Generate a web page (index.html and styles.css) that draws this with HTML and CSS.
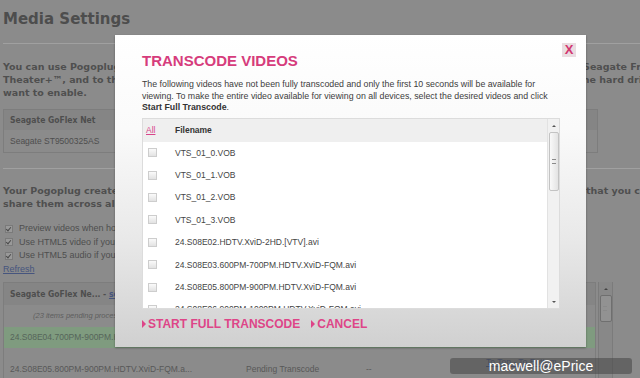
FILE: index.html
```html
<!DOCTYPE html>
<html lang="en">
  <head>
    <meta charset="UTF-8" />
    <title>Media Settings</title>
    <link rel="stylesheet" href="styles.css">
  </head>
  <body>
    <div class="page">
      <h1 class="title">Media Settings</h1>
      <hr class="rule" />

      <p class="lead">
        You can use Pogoplug to stream your media to devices such as the Apple TV, iPhone, iPad, Xbox 360, Roku, Seagate FreeAgent<br>
        Theater+™, and to the web. Pogoplug will index media on the drives you select below. Choose which of all the hard drives you<br>
        want to enable.
      </p>

      <div class="device-box">
        <div class="device-head">Seagate GoFlex Net</div>
        <div class="device-row">Seagate ST9500325AS</div>
      </div>

      <hr class="rule rule-low" />

      <p class="lead lead-low">
        Your Pogoplug creates copies of your videos in formats for the web, mobile phones and all other TV devices that you can<br>
        share them across all of your devices.
      </p>

      <ul class="options">
        <li><span class="check"></span>Preview videos when hovering over thumbnails</li>
        <li><span class="check"></span>Use HTML5 video if your browser supports it</li>
        <li><span class="check"></span>Use HTML5 audio if your browser supports it</li>
      </ul>
      <a class="refresh" href="#">Refresh</a>

      <div class="media-table">
        <div class="media-list">
          <div class="ml-head">Seagate GoFlex Ne... - <a href="#">select all</a></div>
          <div class="ml-note">(23 items pending processing)</div>
          <div class="ml-row active">24.S08E04.700PM-900PM.HDTV.XviD-FQM.avi</div>
          <div class="ml-row">
            <span class="ml-name">24.S08E05.800PM-900PM.HDTV.XviD-FQM.a...</span>
            <span class="ml-state">Pending Transcode</span>
            <span class="ml-dash">--</span>
            <a class="ml-jump" href="#">To Top - To Bottom</a>
          </div>
        </div>
        <div class="scrollbar page-scroll">
          <span class="arrow up"></span>
          <span class="thumb"></span>
        </div>
      </div>
    </div>

    <div class="modal">
      <span class="close">X</span>
      <h2 class="modal-title">TRANSCODE VIDEOS</h2>
      <p class="modal-text">
        The following videos have not been fully transcoded and only the first 10 seconds will be available for<br>
        viewing. To make the entire video available for viewing on all devices, select the desired videos and click<br>
        <strong>Start Full Transcode</strong>.
      </p>

      <div class="tv-list">
        <div class="tv-table">
          <div class="tv-head">
            <a href="#" class="tv-all">All</a>
            <span>Filename</span>
          </div>
          <div class="tv-body">
            <div class="tv-row"><span class="box"></span><span>VTS_01_0.VOB</span></div>
            <div class="tv-row"><span class="box"></span><span>VTS_01_1.VOB</span></div>
            <div class="tv-row"><span class="box"></span><span>VTS_01_2.VOB</span></div>
            <div class="tv-row"><span class="box"></span><span>VTS_01_3.VOB</span></div>
            <div class="tv-row"><span class="box"></span><span>24.S08E02.HDTV.XviD-2HD.[VTV].avi</span></div>
            <div class="tv-row"><span class="box"></span><span>24.S08E03.600PM-700PM.HDTV.XviD-FQM.avi</span></div>
            <div class="tv-row"><span class="box"></span><span>24.S08E05.800PM-900PM.HDTV.XviD-FQM.avi</span></div>
            <div class="tv-row"><span class="box"></span><span>24.S08E06.900PM-1000PM.HDTV.XviD-FQM.avi</span></div>
          </div>
        </div>
        <div class="scrollbar">
          <span class="arrow up"></span>
          <span class="thumb"></span>
          <span class="fill"></span>
          <span class="arrow down"></span>
        </div>
      </div>

      <div class="modal-actions">
        <a href="#" class="action">START FULL TRANSCODE</a>
        <a href="#" class="action">CANCEL</a>
      </div>
    </div>

    <div class="watermark">macwell@ePrice</div>
  </body>
</html>
```

FILE: styles.css
```css
body {
  margin: 0;
  width: 640px;
  height: 378px;
  overflow: hidden;
  position: relative;
  background: #8b8b8b;
  color: #4e4e4e;
  font-family: "Liberation Sans", Arial, sans-serif;
}
a {
  color: #46557e;
}
.page {
  padding: 0 42px 0 3px;
}
.title {
  margin: 10px 0 0;
  font: bold 15px/18px "DejaVu Sans", sans-serif;
  color: #4d4d4d;
}
.rule {
  border: 0;
  border-top: 1px solid #a0a0a0;
  margin: 15px -42px 0 0;
}
.lead {
  margin: 16px 0 0;
  font: bold 9.5px/13px "DejaVu Sans", sans-serif;
  color: #4f4f4f;
  white-space: nowrap;
}
.lead-low {
  margin-top: 15px;
}
.device-box {
  margin-top: 10px;
  border: 1px solid #7d7d7d;
}
.device-head {
  height: 20px;
  line-height: 20px;
  padding-left: 6px;
  background: #858585;
  font: bold 8.5px/20px "DejaVu Sans Condensed", "DejaVu Sans", sans-serif;
}
.device-row {
  height: 22px;
  line-height: 22px;
  padding-left: 6px;
  font-size: 8.5px;
}
.options {
  list-style: none;
  margin: 12px 0 0;
  padding: 0;
  font-size: 9px;
  line-height: 13.5px;
}
.options li {
  display: flex;
  align-items: center;
  white-space: nowrap;
}
.check {
  width: 6px;
  height: 6px;
  margin: 0 6px 0 2px;
  border: 1px solid #7a7a7a;
  background: #999;
  position: relative;
}
.check::after {
  content: "";
  position: absolute;
  left: 1px;
  top: 0;
  width: 2px;
  height: 4px;
  border: solid #4a4a4a;
  border-width: 0 1px 1px 0;
  transform: rotate(40deg);
}
.refresh {
  display: block;
  font-size: 9px;
  line-height: 12px;
}
.media-table {
  display: flex;
  gap: 2px;
  margin: 7px -15px 0 0;
  height: 96px;
}
.media-list {
  flex: 1;
  border: 1px solid #7d7d7d;
  border-bottom: 0;
  font-size: 8.5px;
}
.ml-head {
  height: 22px;
  line-height: 22px;
  padding-left: 6px;
  background: #858585;
  font: bold 8.5px/22px "DejaVu Sans Condensed", "DejaVu Sans", sans-serif;
}
.ml-note {
  height: 22px;
  line-height: 22px;
  padding-left: 29px;
  font-style: italic;
  font-size: 7.5px;
  color: #5e5e5e;
}
.ml-row {
  display: flex;
  align-items: flex-end;
  height: 21px;
  line-height: 21px;
  padding-left: 6px;
  color: #585858;
}
.ml-row.active {
  background: #7f9b7f;
  color: #56655a;
}
.ml-row:last-child {
  height: 32px;
  line-height: 22px;
}
.ml-name {
  width: 236px;
}
.ml-state {
  width: 120px;
}
.ml-dash {
  width: 120px;
}
.ml-jump {
  align-self: flex-start;
  line-height: 12px;
  margin-top: 8px;
}
.scrollbar {
  display: flex;
  flex-direction: column;
  align-items: center;
  width: 11px;
  background: #f1f1f1;
  border-left: 1px solid #e2e2e2;
}
.page-scroll {
  width: 13px;
  background: #888;
  border-left: 1px solid #7b7b7b;
  border-right: 1px solid #7b7b7b;
}
.arrow {
  height: 13px;
  position: relative;
  width: 100%;
}
.arrow::after {
  content: "";
  position: absolute;
  left: 50%;
  top: 6px;
  margin-left: -2px;
  border: 2px solid transparent;
}
.arrow.up::after {
  border-bottom-color: #555;
  border-top-width: 0;
}
.arrow.down::after {
  border-top-color: #555;
  border-bottom-width: 0;
}
.thumb {
  width: 8px;
  height: 57px;
  border: 1px solid #c3c3c3;
  border-radius: 2px;
  background: linear-gradient(to right, #f9f9f9, #e3e3e3);
  position: relative;
}
.thumb::after {
  content: "";
  position: absolute;
  left: 2px;
  top: 50%;
  width: 4px;
  height: 3px;
  margin-top: -2px;
  border-top: 1px solid #8a8a8a;
  border-bottom: 1px solid #8a8a8a;
}
.page-scroll .thumb {
  width: 10px;
  height: 25px;
  border-color: #6f6f6f;
  background: #929292;
}
.page-scroll .arrow.up::after {
  border-bottom-color: #444;
}
.fill {
  flex: 1;
}

.modal {
  position: absolute;
  left: 115px;
  top: 35px;
  width: 471px;
  height: 312px;
  box-sizing: border-box;
  padding: 17px 26px 0 27px;
  background: linear-gradient(to bottom, #ffffff 0%, #fafafa 30%, #e9e9e9 65%, #d0d0d0 100%);
  box-shadow: 0 1px 2px rgba(0, 0, 0, 0.35);
}
.close {
  position: absolute;
  right: 10px;
  top: 8px;
  width: 14px;
  height: 14px;
  background: #eadde1;
  color: #d2376f;
  font: bold 13px/14px "Liberation Sans", Arial, sans-serif;
  text-align: center;
}
.modal-title {
  margin: 0;
  font: bold 15px/18px "Liberation Sans", Arial, sans-serif;
  color: #d63c7c;
}
.modal-text {
  margin: 9px 0 0;
  font-size: 8.8px;
  line-height: 11.5px;
  color: #3c3c3c;
  white-space: nowrap;
}
.modal-text strong {
  color: #333;
}
.tv-list {
  display: flex;
  height: 191px;
  margin-top: 4px;
  box-sizing: border-box;
  border: 1px solid #dcdcdc;
  background: #fff;
}
.tv-table {
  flex: 1;
  display: flex;
  flex-direction: column;
  overflow: hidden;
  font-size: 8.5px;
  color: #444;
}
.tv-head {
  display: grid;
  grid-template-columns: 32px 1fr;
  align-items: center;
  height: 23px;
  flex: none;
  background: #efefef;
}
.tv-head span {
  font-weight: bold;
  color: #333;
}
.tv-all {
  padding-left: 3px;
  color: #d8448a;
}
.tv-body {
  flex: 1;
  overflow: hidden;
}
.tv-row {
  display: grid;
  grid-template-columns: 32px 1fr;
  align-items: center;
  height: 22.4px;
}
.box {
  width: 7px;
  height: 7px;
  margin-left: 5px;
  border: 1px solid #cdcdcd;
  background: linear-gradient(#fafafa, #e2e2e2);
}
.modal-actions {
  display: flex;
  gap: 11px;
  margin-top: 8px;
}
.action {
  display: flex;
  align-items: center;
  gap: 2px;
  color: #de4588;
  font: bold 12px/15px "Liberation Sans", Arial, sans-serif;
  text-decoration: none;
}
.action::before {
  content: "";
  border: 4px solid transparent;
  border-left: 4px solid #de4588;
  border-right-width: 0;
}

.watermark {
  position: absolute;
  left: 450px;
  top: 358px;
  width: 182px;
  height: 16px;
  border-radius: 3px;
  background: rgba(70, 70, 70, 0.55);
  color: #fff;
  font: 14px/16px "Liberation Sans", Arial, sans-serif;
  text-align: center;
}
```
